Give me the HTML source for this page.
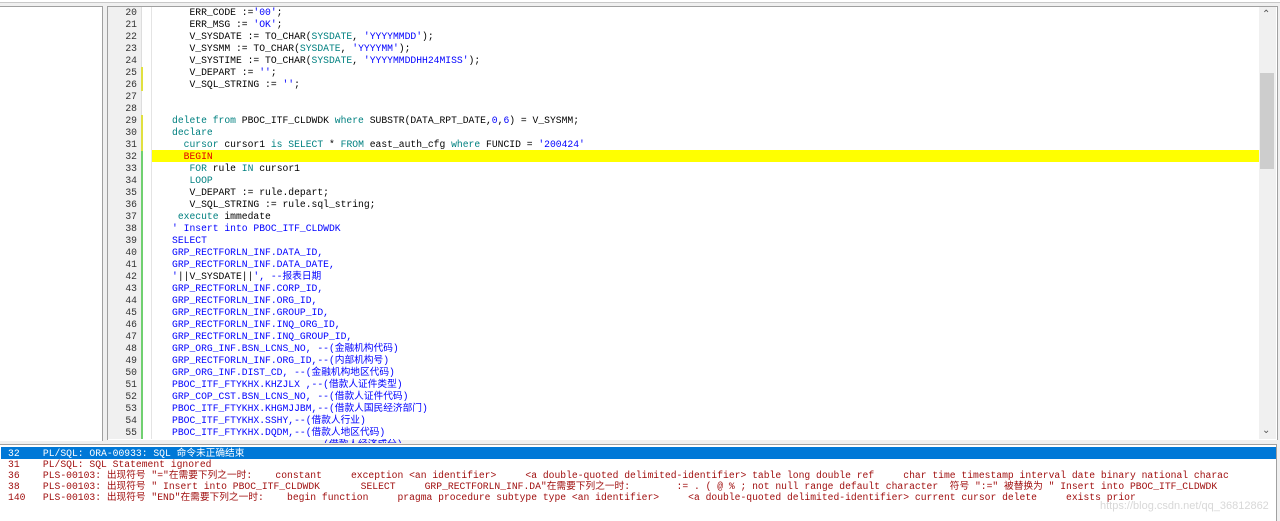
<!DOCTYPE html>
<html><head><meta charset="utf-8"><style>
body{margin:0;width:1280px;height:520px;background:#f0f0f0;position:relative;overflow:hidden;font-family:"Liberation Mono","Noto Sans CJK SC",monospace;font-size:9.7px}
.abs{position:absolute}
.row{position:absolute;height:12px;line-height:12px;white-space:pre}
.k{color:#008080}.s{color:#0000ff}.r{color:#e00000}
.ln{position:absolute;left:108px;width:29px;text-align:right;color:#333;height:12px;line-height:12px}
.mk{position:absolute;left:141px;width:2px;height:12px}
.e{color:#a01010}
</style></head><body>
<div class="abs" style="left:0;top:0;width:1280px;height:2px;background:#fff"></div>
<div class="abs" style="left:0;top:2px;width:1280px;height:1px;background:#c8c8c8"></div>
<div class="abs" style="left:0;top:6px;width:102px;height:434px;background:#fff;border-top:1px solid #a0a0a0;border-right:1px solid #a0a0a0"></div>
<div class="abs" style="left:107px;top:6px;width:1169px;height:433px;background:#fff;border:1px solid #a0a0a0;border-bottom:none;overflow:hidden">
</div>
<div class="abs" style="left:108px;top:7px;width:33px;height:432px;background:#f0f0f0;border-right:1px solid #ddd"></div>
<div class="abs" style="left:151px;top:7px;width:1px;height:432px;background:#e4e4e4"></div>
<div class="abs" style="left:152px;top:150px;width:1107px;height:12px;background:#ffff00"></div>
<div class="abs" style="left:1259px;top:7px;width:17px;height:432px;background:#f0f0f0"></div>
<div class="abs" style="left:1260px;top:73px;width:14px;height:96px;background:#cdcdcd"></div>
<div class="abs" style="left:1262px;top:9px;font-size:10px;color:#555">&#8963;</div>
<div class="abs" style="left:1262px;top:425px;font-size:10px;color:#555">&#8964;</div>
<div id="code"></div>
<div class="abs" style="left:0;top:444px;width:1276px;height:76px;background:#fff;border-top:1px solid #a0a0a0;border-right:1px solid #a0a0a0"></div>
<div class="abs" style="left:1px;top:447px;width:1275px;height:12px;background:#0078d7"></div>
<div class="row" style="left:8px;top:448px;color:#fff">32    PL/SQL: ORA-00933: SQL 命令未正确结束</div>
<div class="row e" style="left:8px;top:459px">31    PL/SQL: SQL Statement ignored</div>
<div class="row e" style="left:8px;top:470px">36    PLS-00103: 出现符号 "="在需要下列之一时:    constant     exception &lt;an identifier&gt;     &lt;a double-quoted delimited-identifier&gt; table long double ref     char time timestamp interval date binary national charac</div>
<div class="row e" style="left:8px;top:481px">38    PLS-00103: 出现符号 " Insert into PBOC_ITF_CLDWDK       SELECT     GRP_RECTFORLN_INF.DA"在需要下列之一时:        := . ( @ % ; not null range default character  符号 ":=" 被替换为 " Insert into PBOC_ITF_CLDWDK</div>
<div class="row e" style="left:8px;top:492px">140   PLS-00103: 出现符号 "END"在需要下列之一时:    begin function     pragma procedure subtype type &lt;an identifier&gt;     &lt;a double-quoted delimited-identifier&gt; current cursor delete     exists prior</div>
<div class="row" style="left:1100px;top:500px;color:#d8d8d8;font-family:'Liberation Sans',sans-serif;font-size:11px">https://blog.csdn.net/qq_36812862</div>
<script>
var L={20:'   ERR_CODE :=<span class=s>\'00\'</span>;',21:'   ERR_MSG := <span class=s>\'OK\'</span>;',22:'   V_SYSDATE := TO_CHAR(<span class=k>SYSDATE</span>, <span class=s>\'YYYYMMDD\'</span>);',23:'   V_SYSMM := TO_CHAR(<span class=k>SYSDATE</span>, <span class=s>\'YYYYMM\'</span>);',24:'   V_SYSTIME := TO_CHAR(<span class=k>SYSDATE</span>, <span class=s>\'YYYYMMDDHH24MISS\'</span>);',25:'   V_DEPART := <span class=s>\'\'</span>;',26:'   V_SQL_STRING := <span class=s>\'\'</span>;',27:'',28:'',29:'<span class=k>delete from</span> PBOC_ITF_CLDWDK <span class=k>where</span> SUBSTR(DATA_RPT_DATE,<span class=s>0</span>,<span class=s>6</span>) = V_SYSMM;',30:'<span class=k>declare</span>',31:'  <span class=k>cursor</span> cursor1 <span class=k>is SELECT</span> * <span class=k>FROM</span> east_auth_cfg <span class=k>where</span> FUNCID = <span class=s>\'200424\'</span>',32:'  <span class=r>BEGIN</span>',33:'   <span class=k>FOR</span> rule <span class=k>IN</span> cursor1',34:'   <span class=k>LOOP</span>',35:'   V_DEPART := rule.depart;',36:'   V_SQL_STRING := rule.sql_string;',37:' <span class=k>execute</span> immedate',38:'<span class=s>\' Insert into PBOC_ITF_CLDWDK</span>',39:'<span class=s>SELECT</span>',40:'<span class=s>GRP_RECTFORLN_INF.DATA_ID,</span>',41:'<span class=s>GRP_RECTFORLN_INF.DATA_DATE,</span>',42:'<span class=s>\'</span>||V_SYSDATE||<span class=s>\', --报表日期</span>',43:'<span class=s>GRP_RECTFORLN_INF.CORP_ID,</span>',44:'<span class=s>GRP_RECTFORLN_INF.ORG_ID,</span>',45:'<span class=s>GRP_RECTFORLN_INF.GROUP_ID,</span>',46:'<span class=s>GRP_RECTFORLN_INF.INQ_ORG_ID,</span>',47:'<span class=s>GRP_RECTFORLN_INF.INQ_GROUP_ID,</span>',48:'<span class=s>GRP_ORG_INF.BSN_LCNS_NO, --(金融机构代码)</span>',49:'<span class=s>GRP_RECTFORLN_INF.ORG_ID,--(内部机构号)</span>',50:'<span class=s>GRP_ORG_INF.DIST_CD, --(金融机构地区代码)</span>',51:'<span class=s>PBOC_ITF_FTYKHX.KHZJLX ,--(借款人证件类型)</span>',52:'<span class=s>GRP_COP_CST.BSN_LCNS_NO, --(借款人证件代码)</span>',53:'<span class=s>PBOC_ITF_FTYKHX.KHGMJJBM,--(借款人国民经济部门)</span>',54:'<span class=s>PBOC_ITF_FTYKHX.SSHY,--(借款人行业)</span>',55:'<span class=s>PBOC_ITF_FTYKHX.DQDM,--(借款人地区代码)</span>'};
var h='';
for(var n=20;n<=55;n++){var y=7+(n-20)*12;
var c=(n<25)?'':(n==32?'#70d070':(n<32?'#e0e040':'#70d070'));if(n==27||n==28)c='';
h+='<div class="ln" style="top:'+y+'px">'+n+'</div>';
if(c)h+='<div class="mk" style="top:'+y+'px;background:'+c+'"></div>';
h+='<div class="row" style="left:172px;top:'+y+'px">'+L[n]+'</div>';}
h+='<div class="row s" style="left:172px;top:439px;height:4px;overflow:hidden">                          (借款人经济成分)</div>';
document.getElementById('code').innerHTML=h;
</script>
</body></html>
